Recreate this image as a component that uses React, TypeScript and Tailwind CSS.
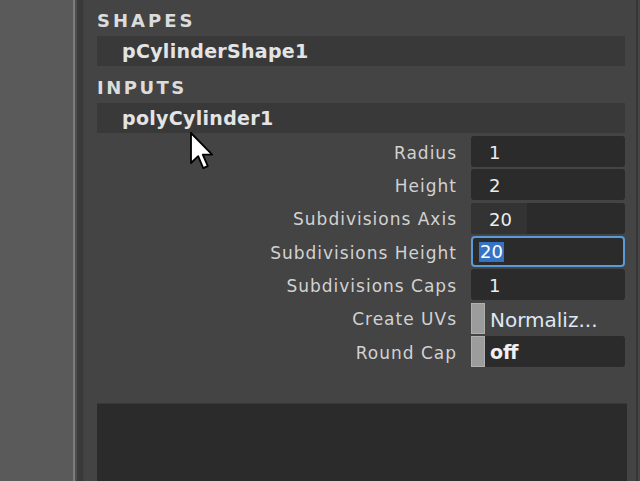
const rows = [
  { label: 'Radius', value: '1', kind: 'field' },
  { label: 'Height', value: '2', kind: 'field' },
  { label: 'Subdivisions Axis', value: '20', kind: 'slider' },
  { label: 'Subdivisions Height', value: '20', kind: 'focus' },
  { label: 'Subdivisions Caps', value: '1', kind: 'field' },
  { label: 'Create UVs', value: 'Normaliz...', kind: 'option' },
  { label: 'Round Cap', value: 'off', kind: 'toggle' },
];

const Cursor = () => (
  <svg
    className="absolute left-[189px] top-[131px]"
    width="28"
    height="42"
    viewBox="0 0 14 21"
  >
    <path
      d="M1 1 L1 16 L4.6 12.6 L7.1 18.6 L9.4 17.6 L6.9 11.8 L11.6 11.8 Z"
      fill="#ffffff"
      stroke="#000000"
      strokeWidth="0.9"
      strokeLinejoin="round"
    />
  </svg>
);

const ValueCell = ({ value, kind }: { value: string; kind: string }) => {
  if (kind === 'option') {
    return (
      <div className="flex h-full w-[154px]">
        <div className="w-[14px] h-full bg-[#9c9c9c] border border-[#b0b0b0]" />
        <span className="pl-[5px] text-[20px] text-[#dfe8f2] leading-[34px]">{value}</span>
      </div>
    );
  }
  if (kind === 'toggle') {
    return (
      <div className="flex h-full w-[154px]">
        <div className="w-[14px] h-full bg-[#9c9c9c] border border-[#b0b0b0]" />
        <div className="flex-1 h-[31px] bg-[#2b2b2b] rounded-r-[3px] flex items-center pl-[5px] pt-[2px]">
          <span className="text-[19px] font-bold text-[#f0f0f0]">{value}</span>
        </div>
      </div>
    );
  }
  if (kind === 'focus') {
    return (
      <div className="w-[154px] h-[31px] bg-[#2b2b2b] rounded-[4px] border-2 border-[#5a9ad8] flex items-center pl-[6px] pt-[1px]">
        <span className="text-[18px] text-white bg-[#3574c4] px-[1px] leading-[20px]">{value}</span>
      </div>
    );
  }
  return (
    <div className="relative w-[154px] h-[31px] bg-[#2b2b2b] rounded-[3px] flex items-center pl-[18px] pt-[2px] overflow-hidden">
      {kind === 'slider' && <div className="absolute left-0 top-0 bottom-0 w-[56px] bg-[#333333]" />}
      <span className="relative text-[18px] text-[#ececec]">{value}</span>
    </div>
  );
};

export default function App() {
  return (
    <div
      className="relative w-[640px] h-[481px] overflow-hidden flex bg-[#444444]"
      style={{ fontFamily: '"DejaVu Sans", "Liberation Sans", sans-serif' }}
    >
      <div className="w-[73px] h-full bg-[#5a5a5a]" />
      <div className="w-[2px] h-full bg-[#7c7c7c]" />
      <div className="w-[2px] h-full bg-[#4e4e4e]" />
      <div className="w-[6px] h-full bg-[#3a3a3a]" />
      <div className="w-[1px] h-full bg-[#404040]" />

      <div className="flex-1 flex flex-col pl-[13px] pr-[11px]">
        <div className="h-[36px] pt-[4px] flex items-center">
          <span className="text-[18px] font-bold tracking-[3px] text-[#dcdcdc]">SHAPES</span>
        </div>
        <div className="h-[30px] bg-[#393939] flex items-center pl-[25px]">
          <span className="text-[19px] font-bold tracking-[0.3px] text-[#e4e4e4]">pCylinderShape1</span>
        </div>
        <div className="h-[37px] pt-[5px] flex items-center">
          <span className="text-[18px] font-bold tracking-[2.5px] text-[#dcdcdc]">INPUTS</span>
        </div>
        <div className="h-[30px] bg-[#393939] flex items-center pl-[25px]">
          <span className="text-[19px] font-bold tracking-[0.3px] text-[#e4e4e4]">polyCylinder1</span>
        </div>

        <div className="flex flex-col gap-[2.33px] pt-[3px]">
          {rows.map((r) => (
            <div key={r.label} className="flex items-center h-[31px]">
              <div className="w-[374px] text-right pr-[14px] pt-[4px] text-[17px] tracking-[1px] text-[#d2d2d2]">
                {r.label}
              </div>
              <ValueCell value={r.value} kind={r.kind} />
            </div>
          ))}
        </div>

        <div className="mt-[36px] flex-1 bg-[#2b2b2b] border-t border-[#383838] mr-[-2px]" />
      </div>

      <div className="w-[2px] h-full bg-[#363636]" />
      <div className="w-[2px] h-full bg-[#454545]" />

      <Cursor />
    </div>
  );
}
